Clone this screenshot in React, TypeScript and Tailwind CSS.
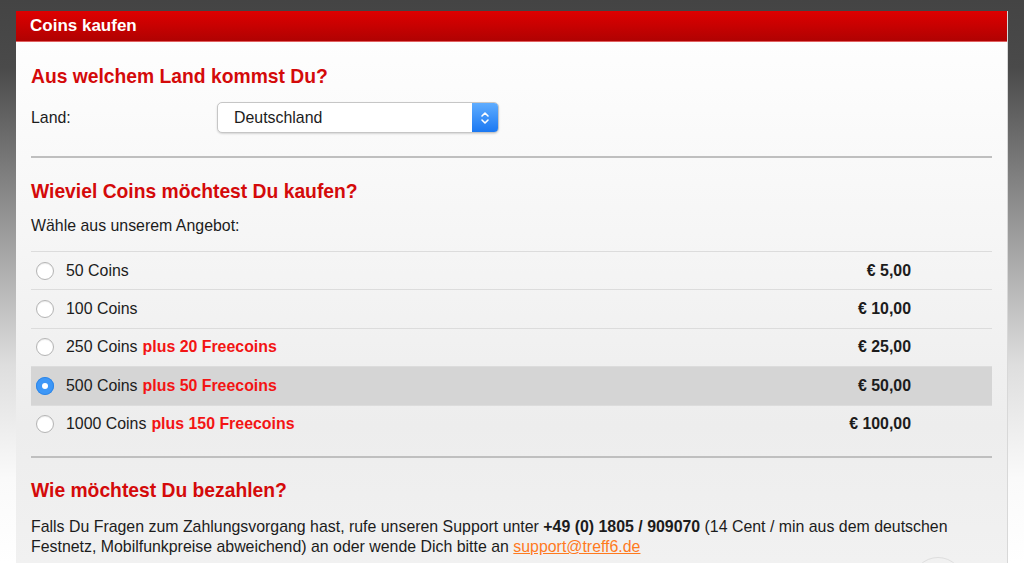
import React from 'react';

interface Offer {
  coins: string;
  bonus?: string;
  price: string;
}

const offers: Offer[] = [
  { coins: '50 Coins', price: '€ 5,00' },
  { coins: '100 Coins', price: '€ 10,00' },
  { coins: '250 Coins', bonus: 'plus 20 Freecoins', price: '€ 25,00' },
  { coins: '500 Coins', bonus: 'plus 50 Freecoins', price: '€ 50,00' },
  { coins: '1000 Coins', bonus: 'plus 150 Freecoins', price: '€ 100,00' },
];

const Heading: React.FC<{ children: React.ReactNode; className?: string }> = ({ children, className }) => (
  <h2 className={`text-[19.3px] leading-[20px] font-bold text-[#d40a0a] ${className ?? ''}`}>{children}</h2>
);

const Radio: React.FC<{ checked: boolean }> = ({ checked }) =>
  checked ? (
    <span className="flex h-[18px] w-[18px] shrink-0 items-center justify-center rounded-full bg-[#3d97f7] shadow-[inset_0_0_0_1px_#2f86e6]">
      <span className="h-[6px] w-[6px] rounded-full bg-white" />
    </span>
  ) : (
    <span className="h-[18px] w-[18px] shrink-0 rounded-full border border-[#b4b4b4] bg-white shadow-[inset_0_1px_1px_rgba(0,0,0,0.08)]" />
  );

const Divider = () => <div className="h-[2px] bg-[#bfbfbf]" />;

export default function App() {
  const selected = 3;

  return (
    <div
      className="h-[563px] w-[1024px] overflow-hidden bg-[linear-gradient(to_bottom,#444_0%,#4a4a4a_12%,#8a8a8a_35%,#dedede_65%,#fafafa_85%,#fff_100%)] px-[16px] pt-[11px]"
      style={{ fontFamily: '"Liberation Sans", Arial, sans-serif' }}
    >
      <div className="h-full border-r border-[#d8d8d8] bg-[linear-gradient(to_bottom,#ffffff_0%,#f6f6f6_40%,#ededed_75%,#f1f1f1_100%)]">
        <div className="flex h-[31px] items-center border-b border-[#e06060] bg-[linear-gradient(to_bottom,#de0000,#b00202)] pl-[14px]">
          <span className="text-[17px] font-bold text-white">Coins kaufen</span>
        </div>

        <div className="pl-[15px] pr-[15px] text-[15.9px] leading-[20px] text-[#1c1c1c]">
          <Heading className="mt-[25px]">Aus welchem Land kommst Du?</Heading>

          <div className="mt-[15px] flex h-[31px] items-center">
            <span className="w-[186px]">Land:</span>
            <div className="flex h-[31px] w-[282px] overflow-hidden rounded-[5px] border border-[#c6c6c6] bg-white shadow-[0_1px_2px_rgba(0,0,0,0.15)]">
              <span className="flex flex-1 items-center pl-[16px]">Deutschland</span>
              <span className="flex w-[26px] items-center justify-center bg-[linear-gradient(to_bottom,#5fadff,#1b78f2)]">
                <svg width="10" height="16" viewBox="0 0 10 16" fill="none" stroke="white" strokeWidth="1.6" strokeLinecap="round" strokeLinejoin="round">
                  <path d="M2 6 L5 3 L8 6" />
                  <path d="M2 10 L5 13 L8 10" />
                </svg>
              </span>
            </div>
          </div>

          <div className="mt-[23px]">
            <Divider />
          </div>

          <Heading className="mt-[24px]">Wieviel Coins möchtest Du kaufen?</Heading>
          <p className="mt-[14px]">Wähle aus unserem Angebot:</p>

          <div className="mt-[15px]">
            {offers.map((o, i) => (
              <div
                key={o.coins}
                className={`flex h-[38.4px] items-center border-t border-[#dcdcdc] pl-[5px] pr-[81px] ${i === selected ? 'bg-[#d5d5d5]' : ''}`}
              >
                <Radio checked={i === selected} />
                <span className="ml-[12px]">{o.coins}</span>
                {o.bonus && <span className="ml-[5px] font-bold text-[#f31414]">{o.bonus}</span>}
                <span className="ml-auto font-bold">{o.price}</span>
              </div>
            ))}
          </div>

          <div className="mt-[13px]">
            <Divider />
          </div>

          <Heading className="mt-[23px]">Wie möchtest Du bezahlen?</Heading>
          <p className="mt-[16px]">
            Falls Du Fragen zum Zahlungsvorgang hast, rufe unseren Support unter{' '}
            <b>+49 (0) 1805 / 909070</b> (14 Cent / min aus dem deutschen
            <br />
            Festnetz, Mobilfunkpreise abweichend) an oder wende Dich bitte an{' '}
            <a href="#" className="text-[#ff7a1e] underline">support@treff6.de</a>
          </p>

          <div className="flex justify-end pr-[28px]">
            <span className="h-[52px] w-[52px] rounded-full border border-[#dedede]" />
          </div>
        </div>
      </div>
    </div>
  );
}
